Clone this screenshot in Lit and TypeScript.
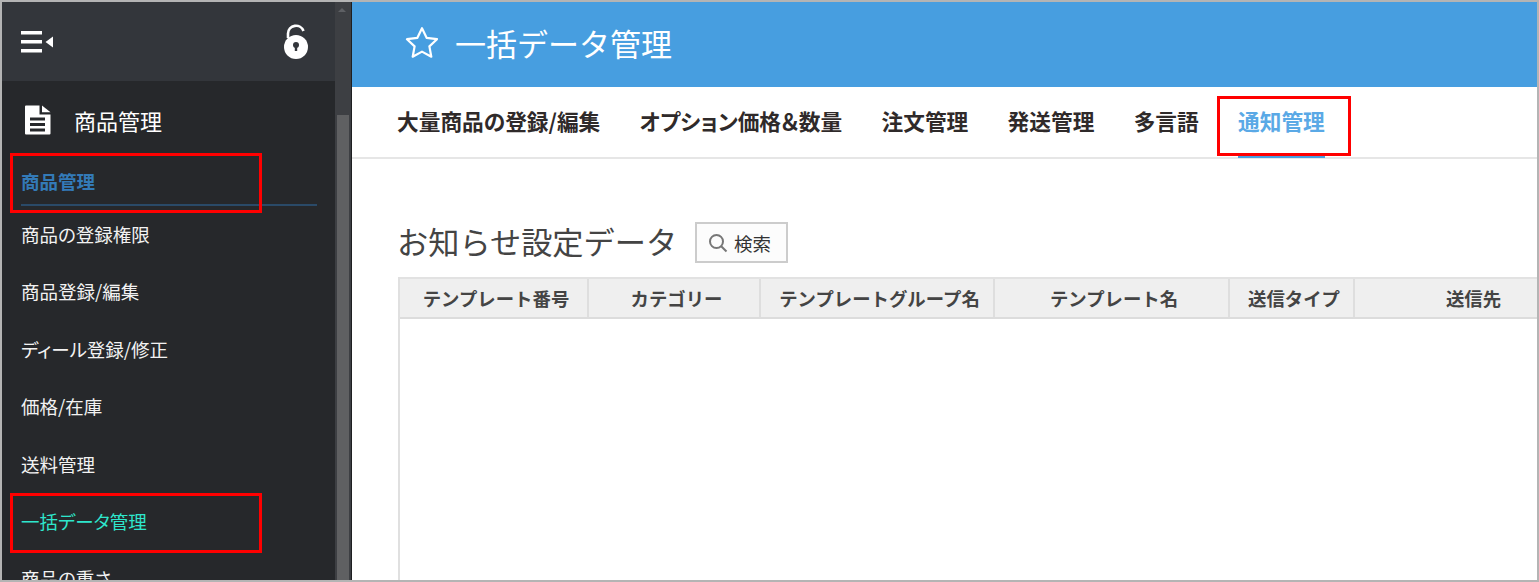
import { LitElement, html, css } from "lit";
import { customElement } from "lit/decorators.js";

@customElement("app-root")
export class AppRoot extends LitElement {
  static styles = css`
    :host {
      display: block;
      position: relative;
      width: 1539px;
      height: 582px;
      box-sizing: border-box;
      border: 2px solid #b4b4b4;
      overflow: hidden;
      background: #fff;
      font-family: "Noto Sans CJK JP", "Liberation Sans", sans-serif;
    }
    * { box-sizing: border-box; }
    .frame { display: grid; grid-template-columns: 350px 1fr; height: 100%; }
    .side { display: grid; grid-template-columns: 333px 16px 1px; height: 578px; overflow: hidden; background: #33363b; }
    .side-main { display: flex; flex-direction: column; min-width: 0; }
    .side-top { height: 79px; flex: none; display: flex; align-items: center; justify-content: space-between; padding: 0 26px 0 19px; background: #33363b; }
    .menu { flex: 1; background: #26282b; padding: 17px 18px 0 19px; overflow: hidden; }
    .menu-head { display: flex; align-items: center; gap: 23px; height: 44px; margin-bottom: 11px; color: #fff; font-size: 22px; padding-left: 3px; }
    .current { height: 53px; color: #337ab7; font-size: 18.5px; font-weight: 700; line-height: 56px; border-bottom: 2px solid #2a4a68; }
    .item { height: 57.4px; line-height: 56px; font-size: 18.5px; color: #f2f2f2; white-space: nowrap; font-feature-settings: "palt"; }
    .item.on { color: #2ee6cc; }
    .track { position: relative; background: #3d3f43; }
    .arrow { position: absolute; left: 3px; top: 6px; width: 0; height: 0; border-left: 4px solid transparent; border-right: 4px solid transparent; border-bottom: 4px solid #5e6064; }
    .thumb { position: absolute; left: 2px; right: 2px; top: 113px; bottom: 0; background: #5f6062; }
    .edge { background: #1e1f21; }
    .main { display: flex; flex-direction: column; min-width: 0; height: 578px; }
    .banner { height: 85px; flex: none; display: flex; align-items: center; gap: 16px; padding: 0 0 5px 53px; background: #479ee0; color: #fff; font-size: 31px; font-weight: 400; }
    .tabs { height: 72px; flex: none; display: flex; gap: 39.3px; padding-left: 45px; border-bottom: 2px solid #e6e6e6; }
    .tab { position: relative; height: 70px; line-height: 68px; font-size: 21.7px; font-weight: 700; color: #2f2a2a; white-space: nowrap; font-feature-settings: "palt"; }
    .tab.on { color: #5aa9e6; border-bottom: 3px solid #479ee0; height: 71px; }
    .content { flex: 1; min-height: 0; display: flex; flex-direction: column; padding: 63px 0 0 46px; }
    .title-row { display: flex; align-items: center; gap: 18px; height: 41px; margin-bottom: 14px; flex: none; }
    h2 { margin: -4px 0 0 -1px; font-size: 31.2px; font-weight: 400; color: #444; white-space: nowrap; line-height: 41px; }
    .btn { width: 93px; height: 41px; display: flex; align-items: center; justify-content: center; gap: 6px; border: 2px solid #ccc; background: #fcfcfc; color: #333; font-size: 18.5px; font-family: inherit; padding: 0 4px 0 0; }
    .tbl { flex: 1; border-left: 2px solid #e0e0e0; overflow: hidden; }
    .thead { display: grid; grid-template-columns: 189px 172px 234px 235px 125px 232px; height: 42px; background: #efefef; border-top: 2px solid #e2e2e2; border-bottom: 2px solid #dcdcdc; }
    .th { display: flex; align-items: center; justify-content: center; padding-left: 5px; font-size: 18.4px; font-weight: 700; color: #444; border-right: 2px solid #dedede; white-space: nowrap; }
    .th:last-child { border-right: 0; }
    .mark { position: absolute; border: 3px solid #f00; pointer-events: none; }
    .m1 { left: 8px; top: 151px; width: 252px; height: 60px; }
    .m2 { left: 8px; top: 491px; width: 252px; height: 60px; }
    .m3 { left: 1215px; top: 94px; width: 134px; height: 60px; }
  `;

  render() {
    const items = ["商品の登録権限", "商品登録/編集", "ディール登録/修正", "価格/在庫", "送料管理"];
    const tabs = ["大量商品の登録/編集", "オプション価格＆数量", "注文管理", "発送管理", "多言語"];
    const cols = ["テンプレート番号", "カテゴリー", "テンプレートグループ名", "テンプレート名", "送信タイプ", "送信先"];
    return html`
      <div class="frame">
        <aside class="side">
          <div class="side-main">
            <div class="side-top">
              <svg width="33" height="24" viewBox="0 0 33 24" fill="#fff">
                <rect x="0" y="1" width="21" height="3.5" /><rect x="0" y="10" width="21" height="3.5" /><rect x="0" y="19" width="21" height="3.5" />
                <path d="M32 6.5v11l-7.5-5.5z" />
              </svg>
              <svg width="26" height="36" viewBox="0 0 26 36">
                <path d="M5 14V9.5a8 8 0 0 1 15.5-2.5" fill="none" stroke="#fff" stroke-width="2.6" />
                <circle cx="13" cy="23" r="12" fill="#fff" />
                <circle cx="13" cy="21" r="3" fill="#33363b" />
                <path d="M11.8 22h2.4v5h-2.4z" fill="#33363b" />
              </svg>
            </div>
            <nav class="menu">
              <div class="menu-head">
                <svg width="27" height="30" viewBox="0 0 27 30">
                  <path fill-rule="evenodd" fill="#fff" d="M1 1.5a1 1 0 0 1 1-1h13.5v9h11V28.5a1 1 0 0 1-1 1H2a1 1 0 0 1-1-1zM6 12.5v3h15v-3zM6 18v3h15v-3zM6 23.5v3h15v-3z" />
                  <path fill="#fff" d="M18 .5l8.5 6.8H18z" />
                </svg>
                <span>商品管理</span>
              </div>
              <div class="current">商品管理</div>
              ${items.map((t) => html`<div class="item">${t}</div>`)}
              <div class="item on">一括データ管理</div>
              <div class="item">商品の重さ</div>
            </nav>
          </div>
          <div class="track"><span class="arrow"></span><span class="thumb"></span></div>
          <div class="edge"></div>
        </aside>
        <main class="main">
          <header class="banner">
            <svg width="34" height="32" viewBox="0 0 34 32" fill="none" stroke="#fff" stroke-width="2.2" stroke-linejoin="round">
              <path d="M17 2.2l4.6 9.6 10.4 1.4-7.6 7.2 1.9 10.3L17 25.6 7.7 30.7l1.9-10.3L2 13.2l10.4-1.4z" />
            </svg>
            <span>一括データ管理</span>
          </header>
          <div class="tabs">
            ${tabs.map((t) => html`<div class="tab">${t}</div>`)}
            <div class="tab on">通知管理</div>
          </div>
          <section class="content">
            <div class="title-row">
              <h2>お知らせ設定データ</h2>
              <button class="btn">
                <svg width="20" height="20" viewBox="0 0 20 20" fill="none" stroke="#777" stroke-width="2">
                  <circle cx="8.5" cy="8.5" r="6.5" /><path d="M13.2 13.2l5.3 5.3" />
                </svg>
                検索
              </button>
            </div>
            <div class="tbl">
              <div class="thead">${cols.map((c) => html`<div class="th">${c}</div>`)}</div>
            </div>
          </section>
        </main>
      </div>
      <div class="mark m1"></div>
      <div class="mark m2"></div>
      <div class="mark m3"></div>
    `;
  }
}
